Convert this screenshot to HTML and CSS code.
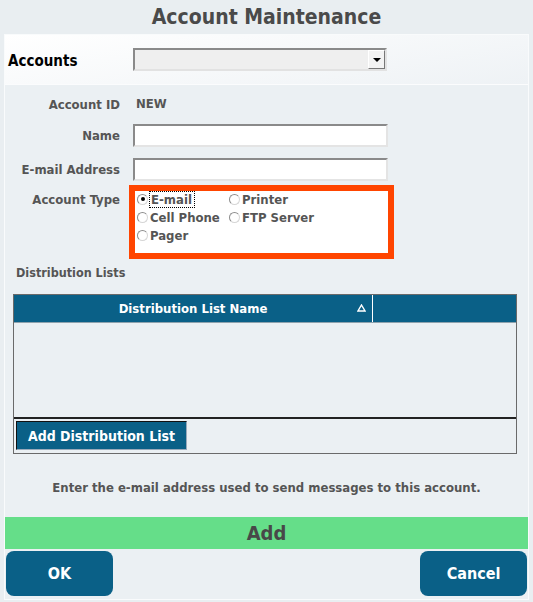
FILE: index.html
```html
<!DOCTYPE html>
<html lang="en">
<head>
    <meta charset="UTF-8">
    <meta name="viewport" content="width=device-width, initial-scale=1.0">
    <title>Account Maintenance</title>
    <link rel="stylesheet" href="styles.css">
</head>
<body>
    <h1 class="title">Account Maintenance</h1>

    <div class="panel">
        <div class="accounts-bar">
            <span class="accounts-label">Accounts</span>
            <div class="select">
                <span class="select-btn"><span class="select-arrow"></span></span>
            </div>
        </div>

        <div class="form">
            <div class="form-grid">
                <div class="label">Account ID</div>
                <div class="value">NEW</div>

                <div class="label">Name</div>
                <input class="text-input" type="text">

                <div class="label">E-mail Address</div>
                <input class="text-input" type="text">

                <div class="label label-top">Account Type</div>
                <div class="radio-group">
                    <label class="radio"><span class="dot checked"></span><span class="focus">E-mail</span></label>
                    <label class="radio"><span class="dot"></span>Printer</label>
                    <label class="radio"><span class="dot"></span>Cell Phone</label>
                    <label class="radio"><span class="dot"></span>FTP Server</label>
                    <label class="radio"><span class="dot"></span>Pager</label>
                </div>
            </div>

            <div class="section-label">Distribution Lists</div>

            <div class="list-table">
                <div class="list-head">
                    <div class="col-name">
                        Distribution List Name
                        <svg class="sort" width="9" height="8" viewBox="0 0 9 8">
                            <path d="M4.5 1 L8 7 L1 7 Z" fill="none" stroke="#fff" stroke-width="1.4" stroke-linejoin="miter"/>
                        </svg>
                    </div>
                    <div class="col-extra"></div>
                </div>
                <div class="list-body"></div>
                <div class="list-foot">
                    <button class="add-list">Add Distribution List</button>
                </div>
            </div>

            <p class="hint">Enter the e-mail address used to send messages to this account.</p>
        </div>

        <div class="add-bar">Add</div>

        <div class="actions">
            <button class="btn">OK</button>
            <button class="btn">Cancel</button>
        </div>
    </div>
</body>
</html>
```

FILE: styles.css
```css
body {
    margin: 0;
    background-color: #e9eef1;
    font-family: "DejaVu Sans Condensed", "DejaVu Sans", sans-serif;
    font-weight: bold;
    font-size: 13px;
    color: #555;
}

.title {
    margin: 0;
    height: 34px;
    line-height: 35px;
    font-size: 21px;
    text-align: center;
    color: #4a4a4a;
}

.panel {
    margin: 0 4px;
    border: 1px solid #f9fbfc;
    background-color: #ebf0f3;
    height: 564px;
    display: flex;
    flex-direction: column;
}

.accounts-bar {
    height: 49px;
    display: flex;
    align-items: center;
    padding-left: 3px;
    background: linear-gradient(170deg, #ffffff 0%, #eef2f5 100%);
    border-bottom: 1px solid #fbfcfd;
}

.accounts-label {
    width: 125px;
    font-size: 15px;
    color: #000;
    padding-top: 2px;
}

.select {
    width: 250px;
    height: 19px;
    background-color: #efefef;
    border: 2px solid;
    border-color: #8a8a8a #e2e2e2 #e2e2e2 #8a8a8a;
    display: flex;
    justify-content: flex-end;
}

.select-btn {
    width: 15px;
    height: 17px;
    background-color: #f3f3f3;
    border: 1px solid;
    border-color: #fff #777 #777 #fff;
    display: flex;
    align-items: center;
    justify-content: center;
}

.select-arrow {
    width: 0;
    height: 0;
    border-left: 4px solid transparent;
    border-right: 4px solid transparent;
    border-top: 4px solid #000;
}

.form {
    flex: 1;
    padding: 10px 0 0;
}

.form-grid {
    display: grid;
    grid-template-columns: 115px 255px;
    column-gap: 13px;
    row-gap: 11px;
    align-items: center;
}

.label {
    text-align: right;
    color: #555;
}

.label-top {
    align-self: start;
    padding-top: 0;
}

.value {
    height: 18px;
    line-height: 18px;
    padding-left: 3px;
}

.text-input {
    box-sizing: border-box;
    width: 255px;
    height: 23px;
    margin: 0;
    background-color: #fff;
    border: 2px solid;
    border-color: #8a8a8a #e4e4e4 #e4e4e4 #8a8a8a;
}

.radio-group {
    margin: -1px 0 1px 2px;
    height: 62px;
    background-color: #fff;
    outline: 6px solid #ff4500;
    display: grid;
    grid-template-columns: 92px 1fr;
    grid-auto-rows: 18px;
    align-content: start;
    padding-left: 2px;
    font-size: 13px;
}

.radio {
    display: flex;
    align-items: center;
    gap: 2px;
    padding-bottom: 2px;
}

.dot {
    box-sizing: border-box;
    width: 11px;
    height: 11px;
    border-radius: 50%;
    border: 1px solid;
    border-color: #8d8d8d #d6d6d6 #d6d6d6 #8d8d8d;
    background-color: #fff;
    display: flex;
    align-items: center;
    justify-content: center;
}

.dot.checked::after {
    content: "";
    width: 4px;
    height: 4px;
    border-radius: 50%;
    background-color: #000;
}

.focus {
    outline: 1px dotted #000;
    padding: 0 2px 0 1px;
    line-height: 15px;
}

.section-label {
    margin: 11px 0 0 11px;
    height: 15px;
    line-height: 15px;
    font-size: 12.5px;
}

.list-table {
    margin: 14px 11px 0 8px;
    height: 158px;
    border: 1px solid #6a6a6a;
    display: flex;
    flex-direction: column;
}

.list-head {
    height: 27px;
    display: flex;
    background-color: #0a6087;
    color: #fff;
    font-size: 13px;
    border-bottom: 1px solid #8ea2ad;
}

.col-name {
    width: 358px;
    border-right: 1px solid #fff;
    display: flex;
    align-items: center;
    justify-content: center;
    position: relative;
}

.sort {
    position: absolute;
    right: 6px;
    top: 9px;
}

.col-extra {
    flex: 1;
}

.list-body {
    flex: 1;
    border-bottom: 2px solid #222;
}

.list-foot {
    height: 34px;
    padding: 2px 0 0 2px;
    box-sizing: border-box;
}

.add-list {
    width: 171px;
    height: 29px;
    padding: 0;
    background-color: #0a6087;
    color: #fff;
    font-family: inherit;
    font-weight: bold;
    font-size: 14px;
    border: 1px solid;
    border-color: #111 #9ab #9ab #111;
}

.hint {
    margin: 26px 0 0;
    text-align: center;
    line-height: 15px;
}

.add-bar {
    height: 32px;
    line-height: 32px;
    text-align: center;
    background-color: #65de89;
    color: #484848;
    font-size: 20px;
    margin-bottom: 2px;
}

.actions {
    display: flex;
    justify-content: space-between;
    padding: 0 1px 3px;
}

.btn {
    width: 107px;
    height: 45px;
    border: none;
    border-radius: 8px;
    background-color: #0a6087;
    color: #fff;
    font-family: inherit;
    font-weight: bold;
    font-size: 16px;
}
```
